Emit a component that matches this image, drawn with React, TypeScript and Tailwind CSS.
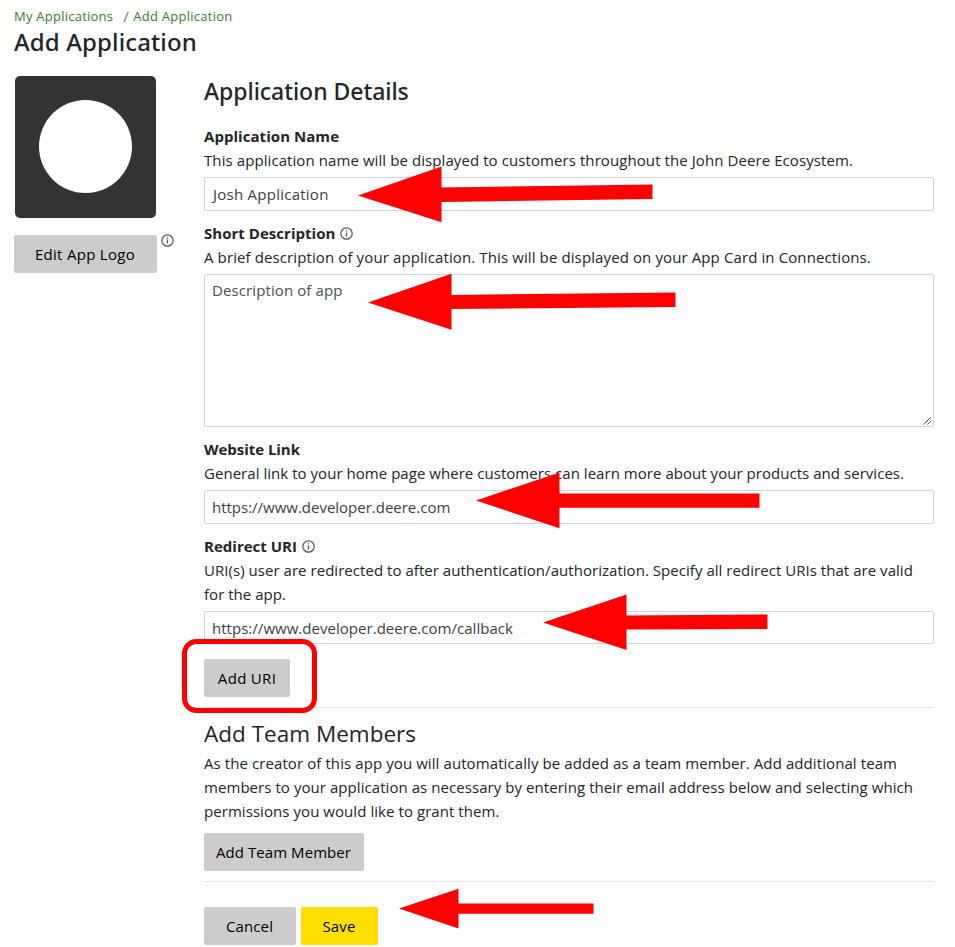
import type { ReactNode } from "react";

function InfoIcon({ className }: { className: string }) {
  return (
    <svg className={className} width="13" height="13" viewBox="0 0 13 13" fill="none" stroke="#555">
      <circle cx="6.5" cy="6.5" r="5.7" strokeWidth="1.2" />
      <path d="M6.5 5.5V9.5M6.5 3.2V4.5" strokeWidth="1.3" />
    </svg>
  );
}

function Label({ children, className, info }: { children: string; className: string; info?: boolean }) {
  return (
    <div className="flex h-6 items-center">
      <span className={`font-bold ${className}`}>{children}</span>
      {info && <InfoIcon className="ml-[5px]" />}
    </div>
  );
}

function Line({ children, className }: { children: ReactNode; className: string }) {
  return <div className={`h-6 whitespace-nowrap ${className}`}>{children}</div>;
}

function Input({ value, className }: { value: string; className: string }) {
  return (
    <div className={`flex items-center rounded-[2px] border border-[#ced4da] text-[#3a3f44] ${className}`}>
      {value}
    </div>
  );
}

function Button({ children, className }: { children: string; className: string }) {
  return (
    <button className={`flex h-[38px] items-center justify-center whitespace-nowrap rounded-[2px] text-black ${className}`}>
      {children}
    </button>
  );
}

export default function App() {
  return (
    <div className="relative h-[947px] w-[955px] overflow-hidden bg-white pl-[14px] font-['Open_Sans','Noto_Sans',sans-serif] text-[15px] leading-6 text-[#212529]">
      <nav className="flex h-[27px] items-center pt-[4px] text-[13px] leading-5 text-[#367c2b]">
        <a className="tracking-[0.241px]">My Applications</a>
        <span className="ml-[10px] w-[10px] text-[15px] text-[#6c757d]">/</span>
        <a className="tracking-[0.26px]">Add Application</a>
      </nav>
      <h1 className="h-[30px] font-['Noto_Sans',sans-serif] text-2xl leading-[30px] font-medium tracking-[0.12px]">
        Add Application
      </h1>

      <div className="flex pt-[19px]">
        <aside className="w-[190px] shrink-0">
          <div className="ml-px flex h-[142px] w-[141px] items-center justify-center rounded-[5px] bg-[#333] pb-px">
            <div className="size-[93px] rounded-full bg-white" />
          </div>
          <div className="mt-[17px] flex">
            <Button className="w-[143px] bg-[#ccc] pr-px tracking-[0.3px]">Edit App Logo</Button>
            <InfoIcon className="ml-1 -mt-px" />
          </div>
        </aside>

        <main className="w-[730px]">
          <h2 className="h-12 font-['Noto_Sans',sans-serif] text-[23px] leading-[30px] font-medium tracking-[-0.04px]">
            Application Details
          </h2>

          <section className="h-[97px]">
            <Label className="tracking-[0.05px]">Application Name</Label>
            <Line className="tracking-[0.083px]">
              This application name will be displayed to customers throughout the John Deere Ecosystem.
            </Line>
            <Input className="mt-[5px] h-[34px] pl-2 tracking-[0.25px]" value="Josh Application" />
          </section>

          <section className="h-[216px]">
            <Label info className="tracking-[0.03px]">Short Description</Label>
            <Line className="tracking-[0.11px]">
              A brief description of your application. This will be displayed on your App Card in Connections.
            </Line>
            <div className="mt-[5px] flex h-[153px] items-end justify-between rounded-[2px] border border-[#ced4da] pl-[7px] text-[#495057]">
              <span className="self-start pt-[3px] tracking-[0.1px]">Description of app</span>
              <svg width="10" height="10" viewBox="0 0 10 10" stroke="#555" strokeWidth="1">
                <path d="M0.5 8.5L8 1M4.5 8.5L8 5" />
              </svg>
            </div>
          </section>

          <section className="h-[97px]">
            <Label className="tracking-[-0.034px]">Website Link</Label>
            <Line className="tracking-[0.04px]">
              General link to your home page where customers can learn more about your products and services.
            </Line>
            <Input className="mt-[5px] h-[34px] pl-[7px] tracking-[-0.01px]" value="https://www.developer.deere.com" />
          </section>

          <section className="h-[174px] border-b border-[#e3e3e3]">
            <Label info className="tracking-[0.015px]">Redirect URI</Label>
            <Line className="tracking-[0.04px]">
              URI(s) user are redirected to after authentication/authorization. Specify all redirect URIs that are valid
            </Line>
            <Line className="tracking-[0.03px]">for the app.</Line>
            <Input className="mt-[5px] h-[33px] pl-[7px] tracking-[0.03px]" value="https://www.developer.deere.com/callback" />
            <Button className="mt-[15px] w-[86px] bg-[#ccc] tracking-[0.31px]">Add URI</Button>
          </section>

          <section className="h-[174px] border-b border-[#e3e3e3] pt-[11px]">
            <h2 className="mb-[2px] h-[30px] text-[22.5px] leading-[30px] tracking-[0.01px]">Add Team Members</h2>
            <Line className="tracking-[0.088px]">
              As the creator of this app you will automatically be added as a team member. Add additional team
            </Line>
            <Line className="tracking-[0.06px]">
              members to your application as necessary by entering their email address below and selecting which
            </Line>
            <Line className="tracking-[0.06px]">permissions you would like to grant them.</Line>
            <Button className="mt-[10px] w-40 bg-[#ccc] pr-px tracking-[0.066px]">Add Team Member</Button>
          </section>

          <div className="flex gap-[5px] pt-[25px]">
            <Button className="w-[92px] bg-[#ccc] pr-px tracking-[0.125px]">Cancel</Button>
            <Button className="w-[77px] bg-[#ffde00] pr-px tracking-[0.175px]">Save</Button>
          </div>
        </main>
      </div>

      <svg className="pointer-events-none absolute top-0 left-0" width="955" height="947" viewBox="0 0 955 947" fill="#f00">
        <path d="M358 195.5L441.5 166.5V187.5L652.5 184.5V199L441.5 202V222.300Z" />
        <path d="M368 302.500L451.500 273.800V295L675.500 292.500V307L451.500 309V329.800Z" />
        <path d="M476 500.500L559.500 472.500V493.500H759.500V507.700H559.500V528.300Z" />
        <path d="M543 622.500L626.500 594.500V615.500L767.500 614.500V629L626.500 629.500V650Z" />
        <path d="M399 908.500L458.500 888.800V903.500H593.500V913.700H458.500V928.500Z" />
        <rect x="184.500" y="641.500" width="130" height="69" rx="12" fill="none" stroke="#f00" strokeWidth="5" />
      </svg>
    </div>
  );
}
